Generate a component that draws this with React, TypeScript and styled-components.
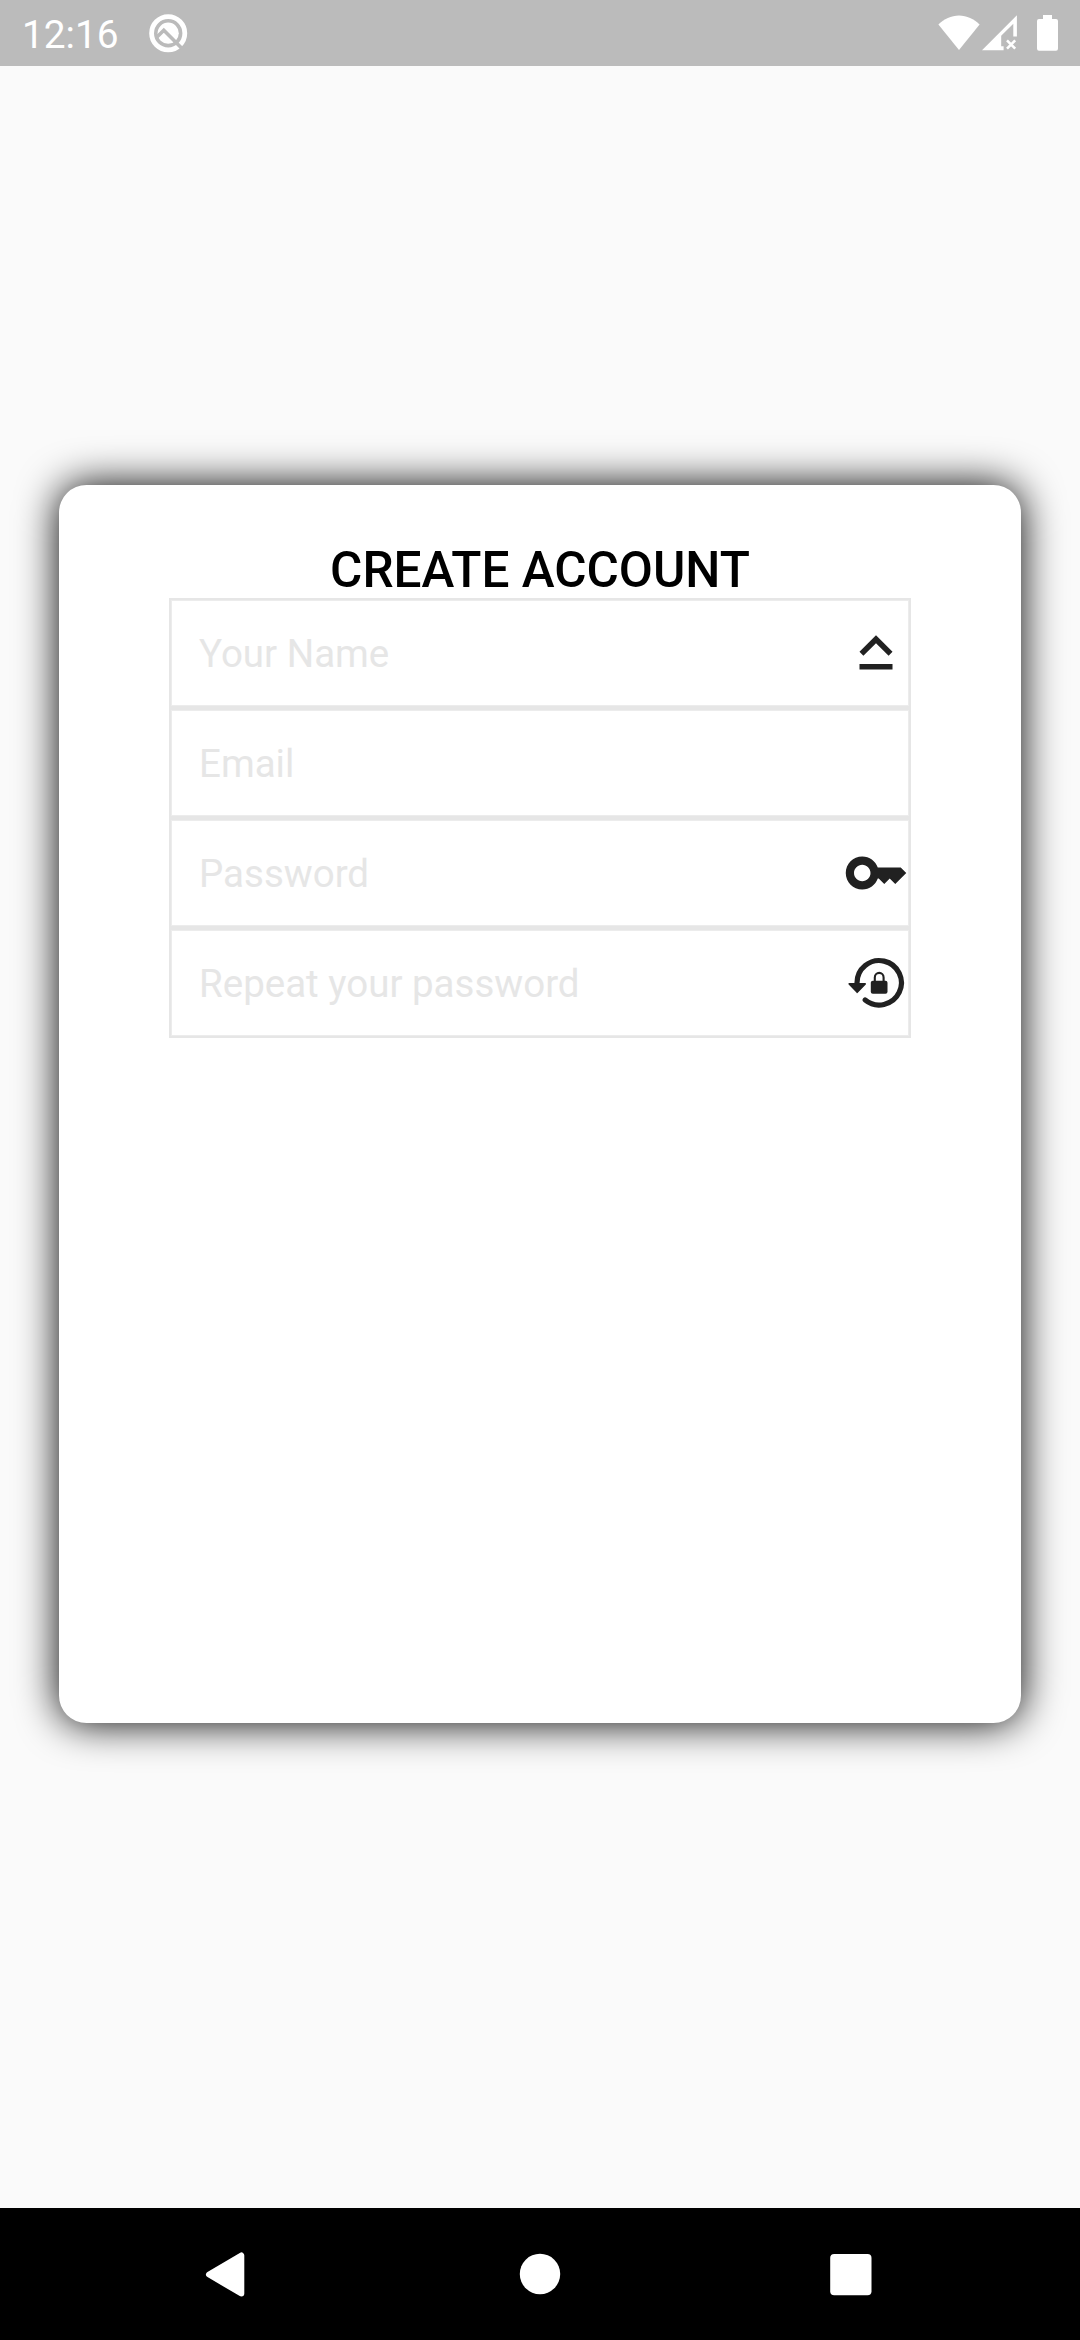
import React from "react";
import styled, { createGlobalStyle } from "styled-components";

const GlobalStyle = createGlobalStyle`
  *, *::before, *::after { box-sizing: border-box; }
  html, body { margin: 0; padding: 0; background: #fafafa; }
  body { font-family: Roboto, "Noto Sans", sans-serif; }
  svg { display: block; }
`;

const Screen = styled.div`
  display: flex;
  flex-direction: column;
  width: 1080px;
  height: 2340px;
  overflow: hidden;
  background: #fafafa;
`;

const StatusBar = styled.header`
  flex: none;
  display: flex;
  align-items: center;
  justify-content: space-between;
  height: 66px;
  padding: 0 22px;
  background: #bbbbbb;
  color: #ffffff;
`;

const StatusGroup = styled.div`
  display: flex;
  align-items: center;
  gap: 29px;
`;

const StatusIcons = styled.div`
  display: flex;
  align-items: flex-start;
  height: 36px;

  svg:nth-child(2) { margin-left: 2px; }
  svg:nth-child(3) { margin-left: 19px; }
`;

const Clock = styled.time`
  width: 97px;
  padding-top: 3px;
  font-size: 38.8px;
  line-height: 46px;
  white-space: nowrap;
`;

const Body = styled.main`
  flex: 1;
  display: flex;
  justify-content: center;
  align-items: flex-start;
  padding-top: 419px;
`;

const Card = styled.section`
  display: flex;
  flex-direction: column;
  align-items: center;
  width: 962.5px;
  height: 1237.5px;
  padding-top: 56px;
  border-radius: 27.5px;
  background: #ffffff;
  box-shadow: 0 0 41px #000000;
`;

const Title = styled.h1`
  margin: 0;
  height: 57px;
  font-size: 49.5px;
  line-height: 58px;
  font-weight: 500;
  color: #000000;
  white-space: nowrap;
`;

const Form = styled.form`
  display: flex;
  flex-direction: column;
  width: 742px;
`;

const Field = styled.label`
  display: flex;
  align-items: center;
  justify-content: space-between;
  height: 110px;
  padding: 0 0 0 28px;
  border: 2px solid #e6e6e6;
  box-shadow: inset 0 0 0 1px #ececec;
`;

const Hint = styled.span`
  padding-top: 1px;
  font-size: 38.5px;
  line-height: 46px;
  color: #e6e6e6;
  white-space: nowrap;
`;

const NavBar = styled.nav`
  flex: none;
  display: flex;
  justify-content: center;
  height: 132px;
  background: #000000;
`;

const NavButton = styled.button`
  display: flex;
  align-items: center;
  justify-content: center;
  width: 311px;
  padding: 0;
  border: 0;
  background: transparent;
`;

const ink = "#212121";

const CapsIcon = () => (
  <svg width="66" height="66" viewBox="0 0 24 24" fill={ink}>
    <path d="M12 8.41L16.59 13 18 11.59l-6-6-6 6L7.41 13 12 8.41zM6 18h12v-2H6v2z" />
  </svg>
);

const KeyIcon = () => (
  <svg width="66" height="66" viewBox="0 0 24 24" fill={ink}>
    <path d="M21 10h-8.35C11.83 7.67 9.61 6 7 6c-3.31 0-6 2.69-6 6s2.69 6 6 6c2.61 0 4.83-1.67 5.65-4H13l2 2 2-2 2 2 4-4.04L21 10zM7 15c-1.65 0-3-1.35-3-3s1.35-3 3-3 3 1.35 3 3-1.35 3-3 3z" />
  </svg>
);

const LockRotationIcon = () => (
  <svg width="66" height="66" viewBox="0 0 66 66" fill={ink}>
    <path
      d="M14 34V33A22.2 22.2 0 1 1 22.2 50"
      fill="none"
      stroke={ink}
      strokeWidth="5.2"
      strokeLinecap="round"
    />
    <path
      d="M6.2 33.9H22.2L14.2 42.3Z"
      stroke={ink}
      strokeWidth="1.6"
      strokeLinejoin="round"
    />
    <rect x="27.8" y="30.7" width="16.7" height="13" rx="2" />
    <path d="M31.8 31.5V27.4a4.4 4.5 0 0 1 8.8 0V31.5" fill="none" stroke={ink} strokeWidth="2.1" />
  </svg>
);

const AssistIcon = () => (
  <svg width="40" height="40" viewBox="0 0 40 40">
    <circle cx="20.2" cy="20.2" r="16.6" fill="none" stroke="#fff" strokeWidth="4.8" />
    <circle cx="20.2" cy="20.2" r="10.6" fill="#fff" />
    <path d="M8.5 24.5L15.8 17.2L36 37.4" fill="none" stroke="#bbb" strokeWidth="3.6" />
  </svg>
);

const WifiIcon = () => (
  <svg width="42" height="36" viewBox="0 0 42 36" fill="#fff">
    <path d="M21 35L0.4 9.6C6 4.2 13.2 0.6 21 0.6S36 4.2 41.6 9.6Z" />
  </svg>
);

const SignalIcon = () => (
  <svg width="36" height="36" viewBox="0 0 36 36">
    <path d="M0 35.2L34.9 0.2V21.6H31.3V8.8L19.2 20.8V31.2H21.6V35.2Z" fill="#fff" />
    <path d="M25 25.4L33.2 33.6M33.2 25.4L25 33.6" stroke="#fff" strokeWidth="2.6" />
  </svg>
);

const BatteryIcon = () => (
  <svg width="21" height="36" viewBox="0 0 21 36" fill="#fff">
    <path d="M6 0H15V4H19Q21 4 21 6V33.6Q21 35.8 19 35.8H2Q0 35.8 0 33.6V6Q0 4 2 4H6Z" />
  </svg>
);

const fields: { hint: string; icon?: React.ReactNode }[] = [
  { hint: "Your Name", icon: <CapsIcon /> },
  { hint: "Email" },
  { hint: "Password", icon: <KeyIcon /> },
  { hint: "Repeat your password", icon: <LockRotationIcon /> },
];

export default function App() {
  return (
    <Screen>
      <GlobalStyle />
      <StatusBar>
        <StatusGroup>
          <Clock>12:16</Clock>
          <AssistIcon />
        </StatusGroup>
        <StatusIcons>
          <WifiIcon />
          <SignalIcon />
          <BatteryIcon />
        </StatusIcons>
      </StatusBar>
      <Body>
        <Card>
          <Title>CREATE ACCOUNT</Title>
          <Form>
            {fields.map((f) => (
              <Field key={f.hint}>
                <Hint>{f.hint}</Hint>
                {f.icon}
              </Field>
            ))}
          </Form>
        </Card>
      </Body>
      <NavBar>
        <NavButton aria-label="Back">
          <svg width="66" height="66" viewBox="0 0 66 66">
            <path d="M13 33.5L45.3 14.5V52.5Z" fill="#fff" stroke="#fff" strokeWidth="6" strokeLinejoin="round" />
          </svg>
        </NavButton>
        <NavButton aria-label="Home">
          <svg width="66" height="66" viewBox="0 0 66 66">
            <circle cx="33" cy="33" r="20.2" fill="#fff" />
          </svg>
        </NavButton>
        <NavButton aria-label="Recents">
          <svg width="66" height="66" viewBox="0 0 66 66">
            <rect x="12.2" y="13" width="41.3" height="41.3" rx="4" fill="#fff" />
          </svg>
        </NavButton>
      </NavBar>
    </Screen>
  );
}
